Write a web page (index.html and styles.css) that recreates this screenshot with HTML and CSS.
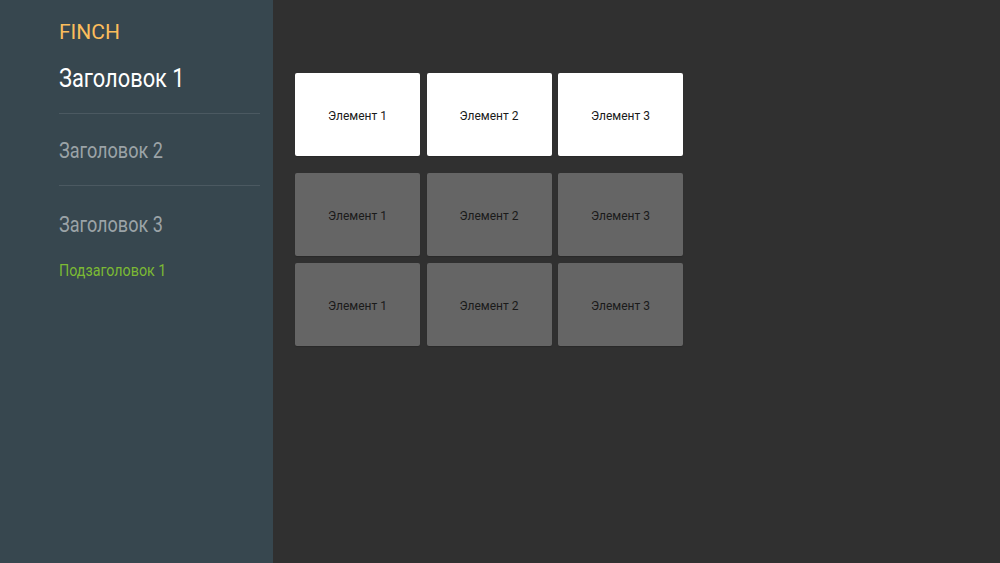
FILE: index.html
```html
<!DOCTYPE html>
<html lang="ru">
<head>
    <meta charset="UTF-8">
    <meta name="viewport" content="width=device-width, initial-scale=1.0">
    <title>Finch</title>
    <link rel="stylesheet" href="styles.css">
</head>
<body>
    <div class="app">
        <aside class="sidebar">
            <div class="logo">FINCH</div>
            <div class="section first active"><span class="label">Заголовок 1</span></div>
            <div class="section"><span class="label">Заголовок 2</span></div>
            <div class="section last"><span class="label">Заголовок 3</span></div>
            <div class="subtitle"><span class="label">Подзаголовок 1</span></div>
        </aside>

        <main class="content">
            <div class="row">
                <div class="card light">Элемент 1</div>
                <div class="card light">Элемент 2</div>
                <div class="card light">Элемент 3</div>
            </div>
            <div class="row">
                <div class="card">Элемент 1</div>
                <div class="card">Элемент 2</div>
                <div class="card">Элемент 3</div>
            </div>
            <div class="row">
                <div class="card">Элемент 1</div>
                <div class="card">Элемент 2</div>
                <div class="card">Элемент 3</div>
            </div>
        </main>
    </div>
</body>
</html>
```

FILE: styles.css
```css
body {
    margin: 0;
    font-family: Roboto, "Noto Sans", Arial, sans-serif;
    background-color: #303030;
}

.app {
    display: flex;
    height: 563px;
    overflow: hidden;
}

.sidebar {
    width: 273px;
    flex-shrink: 0;
    background-color: #37474f;
    padding: 20px 13px 0 59px;
    box-sizing: border-box;
}

.logo {
    font-size: 21px;
    line-height: 24px;
    color: #fbbd5c;
}

/* headings use a narrow face, squeezed from regular Roboto */
.label {
    display: inline-block;
    white-space: nowrap;
    transform: scaleX(0.84);
    transform-origin: left center;
}

.section {
    font-size: 21.5px;
    line-height: 26px;
    color: #9ba3a7;
    padding: 24px 0 21px;
    border-bottom: 1px solid #4b5961;
}

.section.first {
    font-size: 26px;
    line-height: 30px;
    padding: 19px 0 20px;
}

.section.active {
    color: #ffffff;
}

.section.last {
    border-bottom: none;
    padding-top: 26px;
    padding-bottom: 22px;
}

.subtitle {
    font-size: 17px;
    line-height: 20px;
    color: #7cba34;
}

.content {
    flex: 1;
    padding: 73px 0 0 22px;
    display: flex;
    flex-direction: column;
    gap: 7px;
}

.row {
    display: flex;
    gap: 6.5px;
}

.row:first-child {
    margin-bottom: 10px;
}

.card {
    width: 125px;
    height: 83px;
    box-sizing: border-box;
    padding-top: 2px;
    border-radius: 2px;
    background-color: #656565;
    color: #1a1a1a;
    font-size: 12px;
    display: flex;
    align-items: center;
    justify-content: center;
    box-shadow: 0 1px 1px rgba(0, 0, 0, 0.15);
}

.card.light {
    background-color: #ffffff;
    color: #1a1a1a;
}
```
